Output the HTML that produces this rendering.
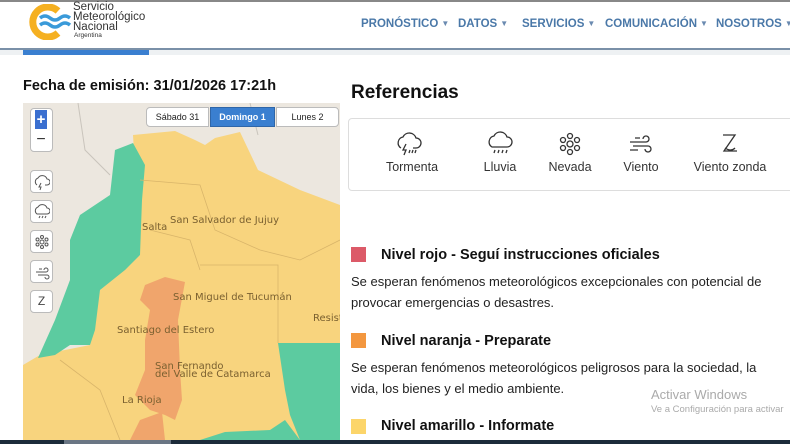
<!DOCTYPE html>
<html><head><meta charset="utf-8"><style>
*{margin:0;padding:0;box-sizing:border-box}
body{width:790px;height:444px;overflow:hidden;background:#fff;font-family:"Liberation Sans",sans-serif;position:relative;color:#222}
.a{position:absolute}
.nav{top:18px;font-size:11.5px;font-weight:bold;color:#4a78a8;white-space:nowrap}
.nav i{font-style:normal;font-size:8px;margin-left:3px;vertical-align:1px;color:#6a8ab0}
.btn{position:absolute;left:30px;width:23px;height:23px;background:#fff;border:1px solid #bbb;border-radius:4px}
.ref{font-size:12.5px;color:#333;text-align:center;position:absolute;top:160px}
.h{font-size:14.5px;font-weight:bold;color:#111;position:absolute;left:381px}
.sq{position:absolute;left:351px;width:15px;height:15px}
.p{position:absolute;left:351px;font-size:13px;line-height:21px;color:#222;width:430px}
</style></head><body>
<div class="a" style="left:0;top:0;width:790px;height:2px;background:#888"></div>
<svg class="a" style="left:28px;top:4px" width="44" height="36" viewBox="0 0 44 36">
<path d="M30 7 A15 15 0 1 0 30 29" fill="none" stroke="#f5b021" stroke-width="7"/>
<path d="M12 14 q5 -4 10 0 t10 0 t10 0" fill="none" stroke="#3a9ad9" stroke-width="3.5"/>
<path d="M12 21 q5 -4 10 0 t10 0 t10 0" fill="none" stroke="#3a9ad9" stroke-width="3.5"/>
</svg>
<div class="a" style="left:73px;top:2px;font-size:11.5px;line-height:10px;color:#333">Servicio<br>Meteorológico<br>Nacional</div>
<div class="a" style="left:74px;top:32px;font-size:6.5px;color:#333">Argentina</div>
<div class="a nav" style="left:361px">PRONÓSTICO<i>▼</i></div>
<div class="a nav" style="left:458px">DATOS<i>▼</i></div>
<div class="a nav" style="left:522px">SERVICIOS<i>▼</i></div>
<div class="a nav" style="left:605px">COMUNICACIÓN<i>▼</i></div>
<div class="a nav" style="left:716px">NOSOTROS<i>▼</i></div>
<div class="a" style="left:0;top:48px;width:790px;height:2px;background:#7a90a8"></div>
<div class="a" style="left:0;top:50px;width:790px;height:5px;background:#eef1f3"></div>
<div class="a" style="left:23px;top:50px;width:126px;height:5px;background:#3a7fd0"></div>
<div class="a" style="left:23px;top:78px;font-size:14.5px;font-weight:bold;color:#111">Fecha de emisión: 31/01/2026 17:21h</div>
<div class="a" style="left:351px;top:82px;font-size:19px;font-weight:bold;color:#111">Referencias</div>
<svg class="a" style="left:23px;top:103px" width="317" height="337" viewBox="23 103 317 337">
<rect x="23" y="103" width="317" height="337" fill="#ece7df"/>
<path d="M78 103 L85 150 L110 175" stroke="#c9c4bc" fill="none"/>
<path d="M250 103 L258 135" stroke="#c9c4bc" fill="none"/>
<polygon points="133,135 175,131 195,140 205,145 215,138 240,132 258,170 300,190 340,205 340,440 23,440 23,365 40,355 90,345 100,290 140,255" fill="#f8d47e"/>
<polygon points="115,150 133,143 145,165 142,200 140,255 125,270 100,290 95,330 90,345 70,345 55,355 38,358 55,320 70,280 70,240 80,215 110,195" fill="#5ccba0"/>
<polygon points="145,285 165,277 185,282 178,320 180,370 182,400 175,420 165,415 150,410 135,395 145,370 145,340 150,310 140,300" fill="#f0a56c"/>
<polygon points="130,440 165,440 162,412 140,420" fill="#f0a56c"/>
<polygon points="278,343 340,343 340,440 300,440 285,420 270,430 225,432 200,440 300,440 290,415 285,390" fill="#5ccba0"/>
<g fill="none" stroke="#d9b56a" stroke-width="0.8"><path d="M140 180 L200 185 L215 230 L260 250 L300 260 L340 240"/><path d="M200 265 L278 265 L278 343"/><path d="M150 230 L190 240 L200 270"/><path d="M60 360 L100 390 L120 440"/></g>
<g font-size="10" fill="#7a6030" font-family="DejaVu Sans,sans-serif">
<text x="170" y="223">San Salvador de Jujuy</text><text x="142" y="230">Salta</text>
<text x="173" y="300">San Miguel de Tucumán</text><text x="117" y="333">Santiago del Estero</text>
<text x="155" y="369">San Fernando</text><text x="155" y="377">del Valle de Catamarca</text>
<text x="122" y="403">La Rioja</text><text x="313" y="321">Resiste</text></g>
</svg>
<div class="a" style="left:30px;top:108px;width:23px;height:44px;background:#fff;border:1px solid #bbb;border-radius:4px"></div>
<div class="a" style="left:35px;top:110px;width:12px;height:19px;background:#3a6fd0;color:#fff;font-weight:bold;font-size:15px;text-align:center;line-height:19px">+</div>
<div class="a" style="left:35px;top:131px;width:12px;font-size:16px;text-align:center;color:#333">−</div>
<div class="btn" style="top:170px"></div><div class="btn" style="top:200px"></div><div class="btn" style="top:230px"></div><div class="btn" style="top:260px"></div><div class="btn" style="top:290px;font-size:12px;text-align:center;line-height:21px;color:#444">Z</div>
<svg class="a" style="left:34px;top:174px" width="16" height="130" viewBox="0 0 16 130" fill="none" stroke="#555" stroke-width="1">
<path d="M3 11 a4 4 0 0 1 1 -7 a5 5 0 0 1 9 1 a3 3 0 0 1 0 6 h-2 M7 9 l-2 4 h2 l-1 3"/>
<g transform="translate(0,30)"><path d="M3 10 a4 4 0 0 1 1 -7 a5 5 0 0 1 9 1 a3 3 0 0 1 0 6 z M6 12 l-1 2 M9 12 l-1 2 M12 12 l-1 2"/></g>
<g transform="translate(0,60)"><circle cx="8" cy="8" r="2"/><circle cx="8" cy="3" r="1.5"/><circle cx="8" cy="13" r="1.5"/><circle cx="3.5" cy="5.5" r="1.5"/><circle cx="12.5" cy="5.5" r="1.5"/><circle cx="3.5" cy="10.5" r="1.5"/><circle cx="12.5" cy="10.5" r="1.5"/></g>
<g transform="translate(0,90)"><path d="M2 8 h10 a2 2 0 1 0 -2 -2 M4 11 h9 a2 2 0 1 1 -2 2 M5 5 h3"/></g>
</svg>
<div class="a" style="left:146px;top:107px;width:63px;height:20px;background:#fff;border:1px solid #bbb;border-radius:4px 0 0 4px;font-size:9px;text-align:center;line-height:18px">Sábado 31</div>
<div class="a" style="left:210px;top:107px;width:65px;height:20px;background:#3a7fd0;border:1px solid #2f66a8;font-size:9px;color:#fff;font-weight:bold;text-align:center;line-height:18px">Domingo 1</div>
<div class="a" style="left:276px;top:107px;width:63px;height:20px;background:#fff;border:1px solid #bbb;border-radius:0 4px 4px 0;font-size:9px;text-align:center;line-height:18px">Lunes 2</div>
<div class="a" style="left:348px;top:118px;width:450px;height:73px;border:1px solid #ddd;border-radius:4px"></div>
<svg class="a" style="left:395px;top:130px" width="390" height="28" viewBox="0 0 390 28" fill="none" stroke="#333" stroke-width="1.3">
<path d="M6 18 a6 6 0 0 1 2 -11 a7 7 0 0 1 13 1 a5 5 0 0 1 0 10 h-3"/><path d="M11 14 l-3 6 h3 l-2 5"/><path d="M15 20 l-1 3 M18 20 l-1 3 M21 20 l-1 3"/>
<g transform="translate(92,0)"><path d="M5 17 a6 6 0 0 1 2 -11 a7 7 0 0 1 13 1 a5 5 0 0 1 0 10 z"/><path d="M8 20 l-1 3 M12 20 l-1 3 M16 20 l-1 3 M20 20 l-1 3"/></g>
<g transform="translate(165,0)"><circle cx="10" cy="14" r="3"/><circle cx="10" cy="6" r="2.5"/><circle cx="10" cy="22" r="2.5"/><circle cx="3" cy="10" r="2.5"/><circle cx="17" cy="10" r="2.5"/><circle cx="3" cy="18" r="2.5"/><circle cx="17" cy="18" r="2.5"/></g>
<g transform="translate(235,0)"><path d="M0 12 h16 a3 3 0 1 0 -3 -3 M3 16 h15 a3 3 0 1 1 -3 3 M5 8 h5 M0 20 h8"/></g>
<g transform="translate(325,0)"><path d="M3 5 h12 l-11 16 h13 M7 5 h6 M5 18 q6 4 10 0"/></g>
</svg>
<div class="ref" style="left:382px;width:60px">Tormenta</div>
<div class="ref" style="left:475px;width:50px">Lluvia</div>
<div class="ref" style="left:545px;width:50px">Nevada</div>
<div class="ref" style="left:616px;width:50px">Viento</div>
<div class="ref" style="left:690px;width:80px">Viento zonda</div>
<div class="sq" style="top:247px;background:#dc5a68"></div>
<div class="h" style="top:247px">Nivel rojo - Seguí instrucciones oficiales</div>
<div class="p" style="top:271px">Se esperan fenómenos meteorológicos excepcionales con potencial de provocar emergencias o desastres.</div>
<div class="sq" style="top:333px;background:#f3973f"></div>
<div class="h" style="top:333px">Nivel naranja - Preparate</div>
<div class="p" style="top:357px">Se esperan fenómenos meteorológicos peligrosos para la sociedad, la vida, los bienes y el medio ambiente.</div>
<div class="sq" style="top:419px;background:#fcd56a"></div>
<div class="h" style="top:418px">Nivel amarillo - Informate</div>
<div class="a" style="left:651px;top:387px;font-size:13px;color:#aaa">Activar Windows</div>
<div class="a" style="left:651px;top:404px;font-size:9.5px;color:#aaa;white-space:nowrap">Ve a Configuración para activar</div>
<div class="a" style="left:0;top:440px;width:790px;height:4px;background:#1c2b3a"></div>
<div class="a" style="left:64px;top:440px;width:107px;height:4px;background:#6a7684"></div>
</body></html>
